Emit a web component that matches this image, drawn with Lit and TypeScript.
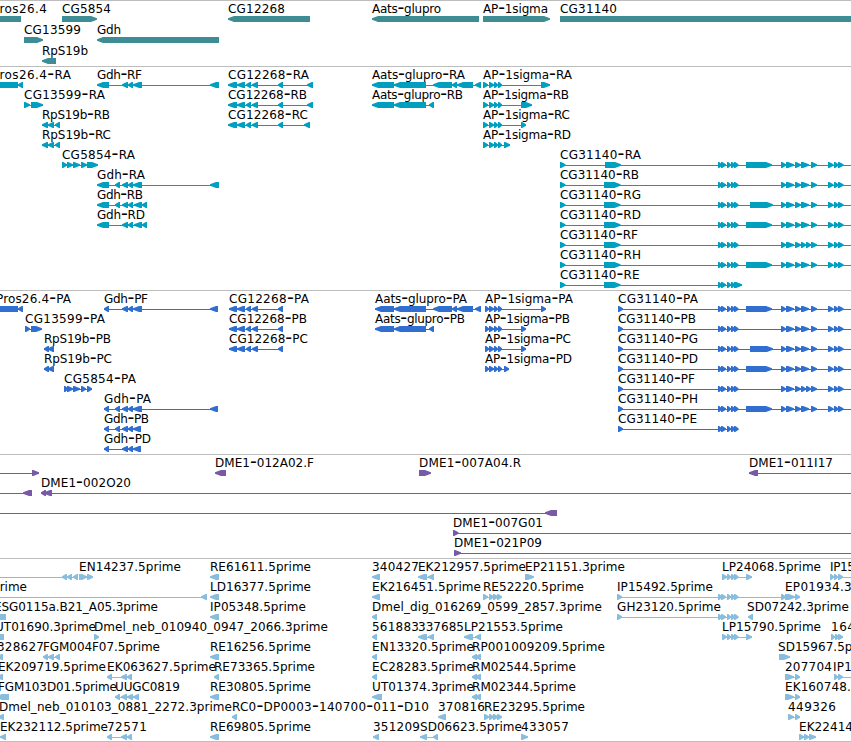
import { LitElement, html, svg, css } from "lit";
import { customElement, property } from "lit/decorators.js";

type Span = [number, number];

interface Feature {
  row: number;
  dir: "l" | "r";
  spans: Span[];
  label?: string;
  labelStart?: number;
  labelEnd?: number;
}

interface Track {
  name: string;
  height: number;
  pitch: number;
  features: Feature[];
}

const VIEW_WIDTH = 851;
const HEAD = 6;
// Features that leave the view are extended past its edges.
const OFF_LEFT = -20;
const OFF_RIGHT = 900;

// "97:109 122:128" -> [[97, 109], [122, 128]]
function parseSpans(text: string): Span[] {
  return text
    .replace("<", `${OFF_LEFT}:${OFF_LEFT}`)
    .replace(">", `${OFF_RIGHT}:${OFF_RIGHT}`)
    .split(" ")
    .map((part) => part.split(":").map(Number) as Span);
}

function f(
  row: number,
  dir: "l" | "r",
  spans: string,
  label?: string,
  labelStart?: number,
  labelEnd?: number
): Feature {
  return { row, dir, spans: parseSpans(spans), label, labelStart, labelEnd };
}

const GDH_MID = "122:128 128:133";
const CG12268 = "237:245 246:251 252:258 278:283";
const AATS_A = "394:426 433:452 452:457 457:473 475:481";
const AATS_B = "394:426 429:434";
const AP = "494:498 498:502";
const CG_START = "718:722 721:726 727:731 731:735 734:738.5";
const CG_MID = "781:786 786:794 795:801 801:809 811:817";
const CG_MID_F = "781:786 786:794 795:801 801:806 806:811 811:817";
const CG_END = "828:833.5 834:838.5 838:843.5 >";
const CG_FULL = `${CG_START} 746:772 ${CG_MID} ${CG_END}`;
const CG_SHORT = `${CG_START} ${CG_MID} ${CG_END}`;
const CG_G = `${CG_START} 750:773 ${CG_MID} ${CG_END}`;
const CG_F = `${CG_START} ${CG_MID_F} ${CG_END}`;
const LP = "722:727 727:731 731:735 734:738.5 746:752";

const TRACKS: Track[] = [
  {
    name: "gene",
    height: 65,
    pitch: 21,
    features: [
      f(0, "l", "-20:21", "Pros26.4", -8, 47),
      f(0, "r", "62:97", "CG5854", 62, 111),
      f(0, "l", "228:310", "CG12268", 228, 285),
      f(0, "l", "372:479", "Aats-glupro", 372, 441),
      f(0, "r", "483:550", "AP-1sigma", 483, 548),
      f(0, "r", "560:900", "CG31140", 560, 617),
      f(1, "r", "24:43", "CG13599", 24, 81),
      f(1, "l", "97:219", "Gdh", 97, 121),
      f(2, "l", "42:56", "RpS19b", 42, 88),
    ],
  },
  {
    name: "transcript",
    height: 223,
    pitch: 20,
    features: [
      f(0, "l", "-20:18 18:23", "Pros26.4-RA", -8, 71),
      f(0, "l", `97:109 ${GDH_MID} 133:142 210:219`, "Gdh-RF", 97, 142),
      f(0, "l", `228:237 ${CG12268} 307:313`, "CG12268-RA", 228, 309),
      f(0, "l", `372:394 ${AATS_A}`, "Aats-glupro-RA", 372, 465),
      f(0, "r", `483:488 489:494 ${AP} 541:550`, "AP-1sigma-RA", 483, 572),
      f(1, "r", "24:30 31:43", "CG13599-RA", 24, 105),
      f(1, "l", `228:237 ${CG12268} 307:313`, "CG12268-RB", 228, 307),
      f(1, "l", `372:394 ${AATS_B}`, "Aats-glupro-RB", 372, 463),
      f(1, "r", `483:488 489:494 ${AP} 521:532`, "AP-1sigma-RB", 483, 569),
      f(2, "l", "42:48 48:54 55:60", "RpS19b-RB", 42, 110),
      f(2, "l", `228:237 ${CG12268} 304:310`, "CG12268-RC", 228, 308),
      f(2, "r", `483:488 489:494 ${AP} 521:526`, "AP-1sigma-RC", 483, 570),
      f(3, "l", "42:48 48:54 55:60", "RpS19b-RC", 42, 111),
      f(3, "r", `483:488 489:494 ${AP} 504:510`, "AP-1sigma-RD", 483, 571),
      f(4, "r", "62:67 67:73 73:80 81:87 87:98", "CG5854-RA", 62, 135),
      f(4, "r", `560:565.5 605:621 ${CG_FULL}`, "CG31140-RA", 560, 641),
      f(5, "l", `97:109 115:120 ${GDH_MID} 133:142 210:219`, "Gdh-RA", 97, 145),
      f(5, "r", `560:565.5 604:620.5 ${CG_SHORT}`, "CG31140-RB", 560, 639),
      f(6, "l", `97:109 115:120 ${GDH_MID} 134:142 142:147`, "Gdh-RB", 97, 143),
      f(6, "r", `560:565.5 604:620.5 ${CG_G}`, "CG31140-RG", 560, 641),
      f(7, "l", `97:109 ${GDH_MID} 134:142 142:147`, "Gdh-RD", 97, 145),
      f(7, "r", `560:565.5 604:620.5 ${CG_FULL}`, "CG31140-RD", 560, 641),
      f(8, "r", `560:565.5 604:620.5 ${CG_F}`, "CG31140-RF", 560, 638),
      f(9, "r", `560:565.5 604:620.5 ${CG_FULL}`, "CG31140-RH", 560, 641),
      f(10, "r", `560:565.5 604:620.5 ${CG_START} 735:742`, "CG31140-RE", 560, 639.5),
    ],
  },
  {
    name: "protein",
    height: 163,
    pitch: 20,
    features: [
      f(0, "l", "-20:18 18:23", "Pros26.4-PA", -4, 71),
      f(0, "l", `104:109 ${GDH_MID} 133:142 210:218`, "Gdh-PF", 104, 148),
      f(0, "l", `229:237 ${CG12268}`, "CG12268-PA", 229, 309),
      f(0, "l", `375:394 ${AATS_A}`, "Aats-glupro-PA", 375, 467),
      f(0, "r", `485:489 489:494 ${AP} 541:546`, "AP-1sigma-PA", 485, 573),
      f(0, "r", `618:623 ${CG_FULL}`, "CG31140-PA", 618, 698),
      f(1, "r", "25:30 31:42", "CG13599-PA", 25, 105),
      f(1, "l", `229:237 ${CG12268}`, "CG12268-PB", 229, 307),
      f(1, "l", `375:394 ${AATS_B}`, "Aats-glupro-PB", 375, 465),
      f(1, "r", `485:489 489:494 ${AP} 521:526`, "AP-1sigma-PB", 485, 570),
      f(1, "r", `618:623 ${CG_SHORT}`, "CG31140-PB", 618, 696),
      f(2, "l", "44:49 48:54", "RpS19b-PB", 44, 111),
      f(2, "l", `229:237 ${CG12268}`, "CG12268-PC", 229, 308),
      f(2, "r", `485:489 489:494 ${AP} 521:526`, "AP-1sigma-PC", 485, 571),
      f(2, "r", `618:623 ${CG_G}`, "CG31140-PG", 618, 698),
      f(3, "l", "44:49 48:54", "RpS19b-PC", 44, 112),
      f(3, "r", `485:489 489:494 ${AP} 504:509`, "AP-1sigma-PD", 485, 572),
      f(3, "r", `618:623 ${CG_FULL}`, "CG31140-PD", 618, 698),
      f(4, "r", "64:68 67:73 73:80 81:86 87:92", "CG5854-PA", 64, 136),
      f(4, "r", `618:623 ${CG_F}`, "CG31140-PF", 618, 695),
      f(5, "l", `104:109 115:120 ${GDH_MID} 133:142 210:218`, "Gdh-PA", 104, 151),
      f(5, "r", `618:623 ${CG_FULL}`, "CG31140-PH", 618, 698),
      f(6, "l", `104:109 115:120 ${GDH_MID} 133:141`, "Gdh-PB", 104, 149),
      f(6, "r", `618:623 ${CG_START}`, "CG31140-PE", 618, 697),
      f(7, "l", `104:109 ${GDH_MID} 133:141`, "Gdh-PD", 104, 151),
    ],
  },
  {
    name: "clone",
    height: 103,
    pitch: 20,
    features: [
      f(0, "r", "< 32:39"),
      f(0, "l", "215:226", "DME1-012A02.F", 215, 314),
      f(0, "r", "419:431", "DME1-007A04.R", 419, 521),
      f(0, "l", "749:758 >", "DME1-011I17", 749, 833),
      f(1, "l", "< 23:32"),
      f(1, "l", "41:46 44:52 >", "DME1-002O20", 41, 131),
      f(2, "l", "< 545:557"),
      f(3, "r", "453:458.5 >", "DME1-007G01", 453, 543),
      f(4, "r", "454:461 >", "DME1-021P09", 454, 542),
    ],
  },
  {
    name: "est",
    height: 182,
    pitch: 20,
    features: [
      f(0, "l", "< 62:67 67:72 73:78"),
      f(0, "r", "79:84 81:87 87:93", "EN14237.5prime", 79, 181),
      f(0, "l", "210:219", "RE61611.5prime", 210, 311),
      f(0, "l", "372:380", "340427", 372, 419),
      f(0, "l", "418:427 428:434", "EK212957.5prime", 418, 526),
      f(0, "r", "525:534", "EP21151.3prime", 525, 625),
      f(0, "r", LP, "LP24068.5prime", 722, 821),
      f(0, "r", "830:834 834:838 838:843 >", "IP15", 830, 855),
      f(1, "l", "< 201:207", "prime", -8, 27),
      f(1, "l", "210:219", "LD16377.5prime", 210, 311),
      f(1, "l", "372:380", "EK216451.5prime", 372, 481),
      f(1, "r", "483:488 489:494 493:498 497:502", "RE52220.5prime", 483, 584),
      f(1, "r", `617:622 ${CG_START} 781:786`, "IP15492.5prime", 617, 713),
      f(1, "r", "785:795 795:800", "EP01934.3prime", 785, 888),
      f(2, "l", "-12:6", "ESG0115a.B21_A05.3prime", -6, 158),
      f(2, "l", "210:219", "IP05348.5prime", 210, 306),
      f(2, "l", "372:377", "Dmel_dig_016269_0599_2857.3prime", 372, 602),
      f(2, "r", `617:622 ${CG_START}`, "GH23120.5prime", 617, 721),
      f(2, "l", "748:753", "SD07242.3prime", 747, 849),
      f(3, "l", "-12:4", "UT01690.3prime", -5, 96),
      f(3, "r", "94:99", "Dmel_neb_010940_0947_2066.3prime", 94, 328),
      f(3, "l", "372:377", "561883", 372, 419),
      f(3, "l", "418:427 428:434", "337685", 418, 464),
      f(3, "l", "464:473 475:481", "LP21553.5prime", 464, 563),
      f(3, "r", LP, "LP15790.5prime", 722, 821),
      f(3, "r", "831:835 835:839 838:843", "164", 831, 855),
      f(4, "l", "-3:3", "328627", -3, 44),
      f(4, "l", "43:48 48:54 55:60", "FGM004F07.5prime", 43, 160),
      f(4, "l", "210:219", "RE16256.5prime", 210, 311),
      f(4, "l", "372:377", "EN13320.5prime", 372, 474),
      f(4, "l", "472:477 475:481", "RP001009209.5prime", 472, 605),
      f(4, "r", "779:790", "SD15967.5prime", 778, 880),
      f(5, "l", "-3:3", "EK209719.5prime", -2, 106),
      f(5, "l", "107:112 121:127 127:132", "EK063627.5prime", 107, 216),
      f(5, "l", "214:219", "RE73365.5prime", 214, 315),
      f(5, "l", "372:377", "EC28283.5prime", 372, 474),
      f(5, "l", "472:477 475:481", "RM02544.5prime", 472, 576),
      f(5, "r", "785:794 795:800", "207704", 785, 832),
      f(5, "r", "834:838 838:843 >", "IP1", 833, 852),
      f(6, "l", "-4:9", "FGM103D01.5prime", -2, 117),
      f(6, "l", "115:120 121:127 127:133 133:139", "UUGC0819", 115, 180),
      f(6, "l", "210:219", "RE30805.5prime", 210, 311),
      f(6, "l", "372:382", "UT01374.3prime", 372, 474),
      f(6, "l", "472:477 475:481", "RM02344.5prime", 472, 576),
      f(6, "r", "785:794 795:800", "EK160748.5prime", 785, 894),
      f(7, "l", "-2:4", "Dmel_neb_010103_0881_2272.3prime", -1, 232),
      f(7, "l", "232:237", "RC0-DP0003-140700-011-D10", 232, 429),
      f(7, "l", "438:446", "370816", 438, 485),
      f(7, "r", "484:489 489:494 493:498 497:502", "RE23295.5prime", 484, 585),
      f(7, "r", "788:794 795:800", "449326", 788, 836),
      f(8, "l", "0:6", "EK232112.5prime", 0, 108),
      f(8, "l", "107:112 121:127 127:132", "72571", 107, 147),
      f(8, "l", "210:219", "RE69805.5prime", 210, 311),
      f(8, "l", "373:379", "351209", 373, 420),
      f(8, "l", "420:427 433:438", "SD06623.5prime", 420, 522),
      f(8, "r", "521:528", "433057", 521, 569),
      f(8, "r", "799:804 804:809 809:816", "EK22414", 799, 853),
    ],
  },
];

@customElement("feature-track")
export class FeatureTrack extends LitElement {
  @property({ attribute: false }) track!: Track;

  static styles = css`
    :host {
      display: block;
      border-top: 1px solid #bdbdbd;
    }

    .canvas {
      display: block;
      overflow: hidden;
    }

    .label {
      font-family: "DejaVu Sans", sans-serif;
      font-size: 12px;
      fill: #000;
    }

    .dash {
      font-size: 19px;
      baseline-shift: -1px;
    }

    .gene {
      fill: #3f8d94;
    }

    .transcript {
      fill: #009fc0;
    }

    .protein {
      fill: #306ecf;
    }

    .clone {
      fill: #7859a8;
    }

    .est {
      fill: #89bddd;
    }
  `;

  private arrow([start, end]: Span, dir: "l" | "r", y: number) {
    if (start === end) return "";
    const head = Math.min(HEAD, end - start - 1.2);
    const tip = dir === "r" ? end : start;
    const tail = dir === "r" ? end - head : start + head;
    const back = dir === "r" ? start : end;
    const points = [
      [back, y],
      [tail, y],
      [tip, y + 2.2],
      [tip, y + 3.8],
      [tail, y + 6],
      [back, y + 6],
    ];
    return svg`<polygon points=${points.map((p) => p.join(",")).join(" ")}></polygon>`;
  }

  // The dash is set wider and lower than the rest of the label.
  private text(label: string) {
    return label
      .split(/(-)/)
      .map((part) => (part === "-" ? svg`<tspan class="dash">-</tspan>` : svg`<tspan>${part}</tspan>`));
  }

  private feature(item: Feature) {
    const baseline = 12 + item.row * this.track.pitch;
    const top = baseline + 3;
    const first = item.spans[0][0];
    const last = item.spans[item.spans.length - 1][1];
    return svg`
      <g class=${this.track.name}>
        ${item.spans.length > 1
          ? svg`<rect x=${first} y=${top + 3} width=${last - first} height="1"></rect>`
          : ""}
        ${item.spans.map((span) => this.arrow(span, item.dir, top))}
      </g>
      ${item.label
        ? svg`<text
            class="label"
            x=${item.labelStart!}
            y=${baseline}
            textLength=${item.labelEnd! - item.labelStart!}
          >${this.text(item.label)}</text>`
        : ""}
    `;
  }

  render() {
    return html`
      <svg class="canvas" width=${VIEW_WIDTH} height=${this.track.height}>
        ${this.track.features.map((item) => this.feature(item))}
      </svg>
    `;
  }
}

@customElement("app-root")
export class AppRoot extends LitElement {
  static styles = css`
    :host {
      display: block;
      width: 851px;
      height: 742px;
      box-sizing: border-box;
      overflow: hidden;
      background: #fff;
    }

    .tracks {
      display: flex;
      flex-direction: column;
      border-bottom: 1px solid #bdbdbd;
    }
  `;

  render() {
    return html`
      <div class="tracks">
        ${TRACKS.map((track) => html`<feature-track .track=${track}></feature-track>`)}
      </div>
    `;
  }
}
